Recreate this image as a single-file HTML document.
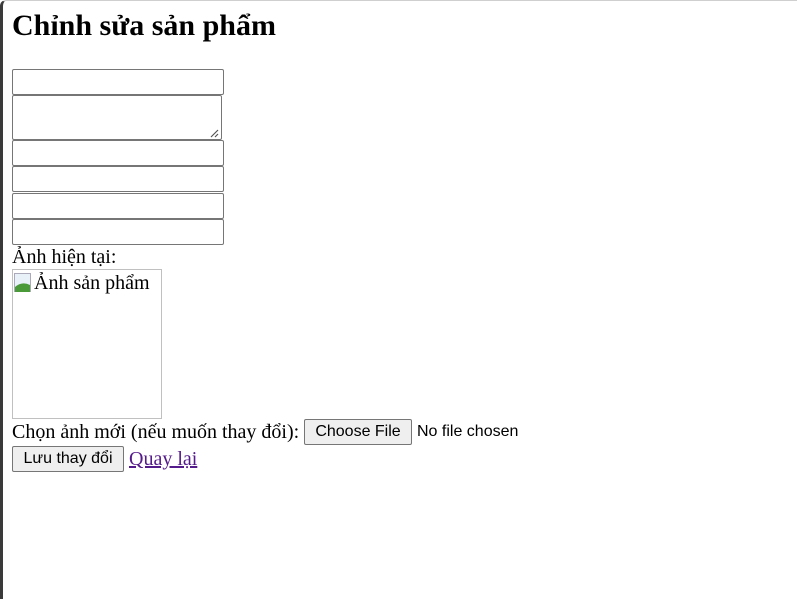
<!DOCTYPE html>
<html><head><meta charset="utf-8"><style>
html,body{margin:0;padding:0;background:#fff;width:797px;height:599px;overflow:hidden;position:relative;font-family:"Liberation Serif",serif;font-size:20px;color:#000}
.frame{position:absolute;left:0;top:0;width:797px;height:599px;box-sizing:border-box;border-left:3px solid #3a3a3a;border-top:1px solid #cfcfcf;border-top-left-radius:6px}
.a{position:absolute;white-space:nowrap}
.in{position:absolute;box-sizing:border-box;border:1px solid #767676;border-radius:2px;background:#fff}
.btn{position:absolute;box-sizing:border-box;border:1px solid #767676;border-radius:2px;background:#efefef;font-family:"Liberation Sans",sans-serif;font-size:16px;line-height:24px;text-align:center}
</style></head><body>
<div class="frame"></div>
<div class="a" style="left:12px;top:7px;font-size:30px;font-weight:bold;line-height:38px">Chỉnh sửa sản phẩm</div>
<div class="in" style="left:12px;top:69px;width:212px;height:26px"></div>
<div class="in" style="left:12px;top:95px;width:210px;height:45px"></div>
<svg class="a" style="left:209px;top:128px" width="10" height="10"><path d="M2 9L9 2M6 9L9 6" stroke="#555" stroke-width="1.2"/></svg>
<div class="in" style="left:12px;top:140px;width:212px;height:26px"></div>
<div class="in" style="left:12px;top:166px;width:212px;height:26px"></div>
<div class="in" style="left:12px;top:193px;width:212px;height:26px"></div>
<div class="in" style="left:12px;top:219px;width:212px;height:26px"></div>
<div class="a" style="left:12px;top:245px;line-height:24px">Ảnh hiện tại:</div>
<div class="a" style="left:12px;top:269px;width:150px;height:150px;box-sizing:border-box;border:1px solid #c0c0c0"></div>
<svg class="a" style="left:14px;top:273px" width="20" height="20"><rect x="0.5" y="0.5" width="16" height="18" fill="#e8f0f8" stroke="#aab"/><path d="M1 19L1 14Q8 8 16 12L16 19Z" fill="#4a9a3a"/></svg>
<div class="a" style="left:34px;top:271px;line-height:24px">Ảnh sản phẩm</div>
<div class="a" style="left:12px;top:420px;line-height:24px">Chọn ảnh mới (nếu muốn thay đổi):</div>
<div class="btn" style="left:304px;top:419px;width:108px;height:26px">Choose File</div>
<div class="a" style="left:417px;top:421px;font-family:'Liberation Sans',sans-serif;font-size:16px;line-height:22px">No file chosen</div>
<div class="btn" style="left:12px;top:446px;width:112px;height:26px">Lưu thay đổi</div>
<div class="a" style="left:129px;top:447px;line-height:24px;color:#551a8b;text-decoration:underline">Quay lại</div>
</body></html>
